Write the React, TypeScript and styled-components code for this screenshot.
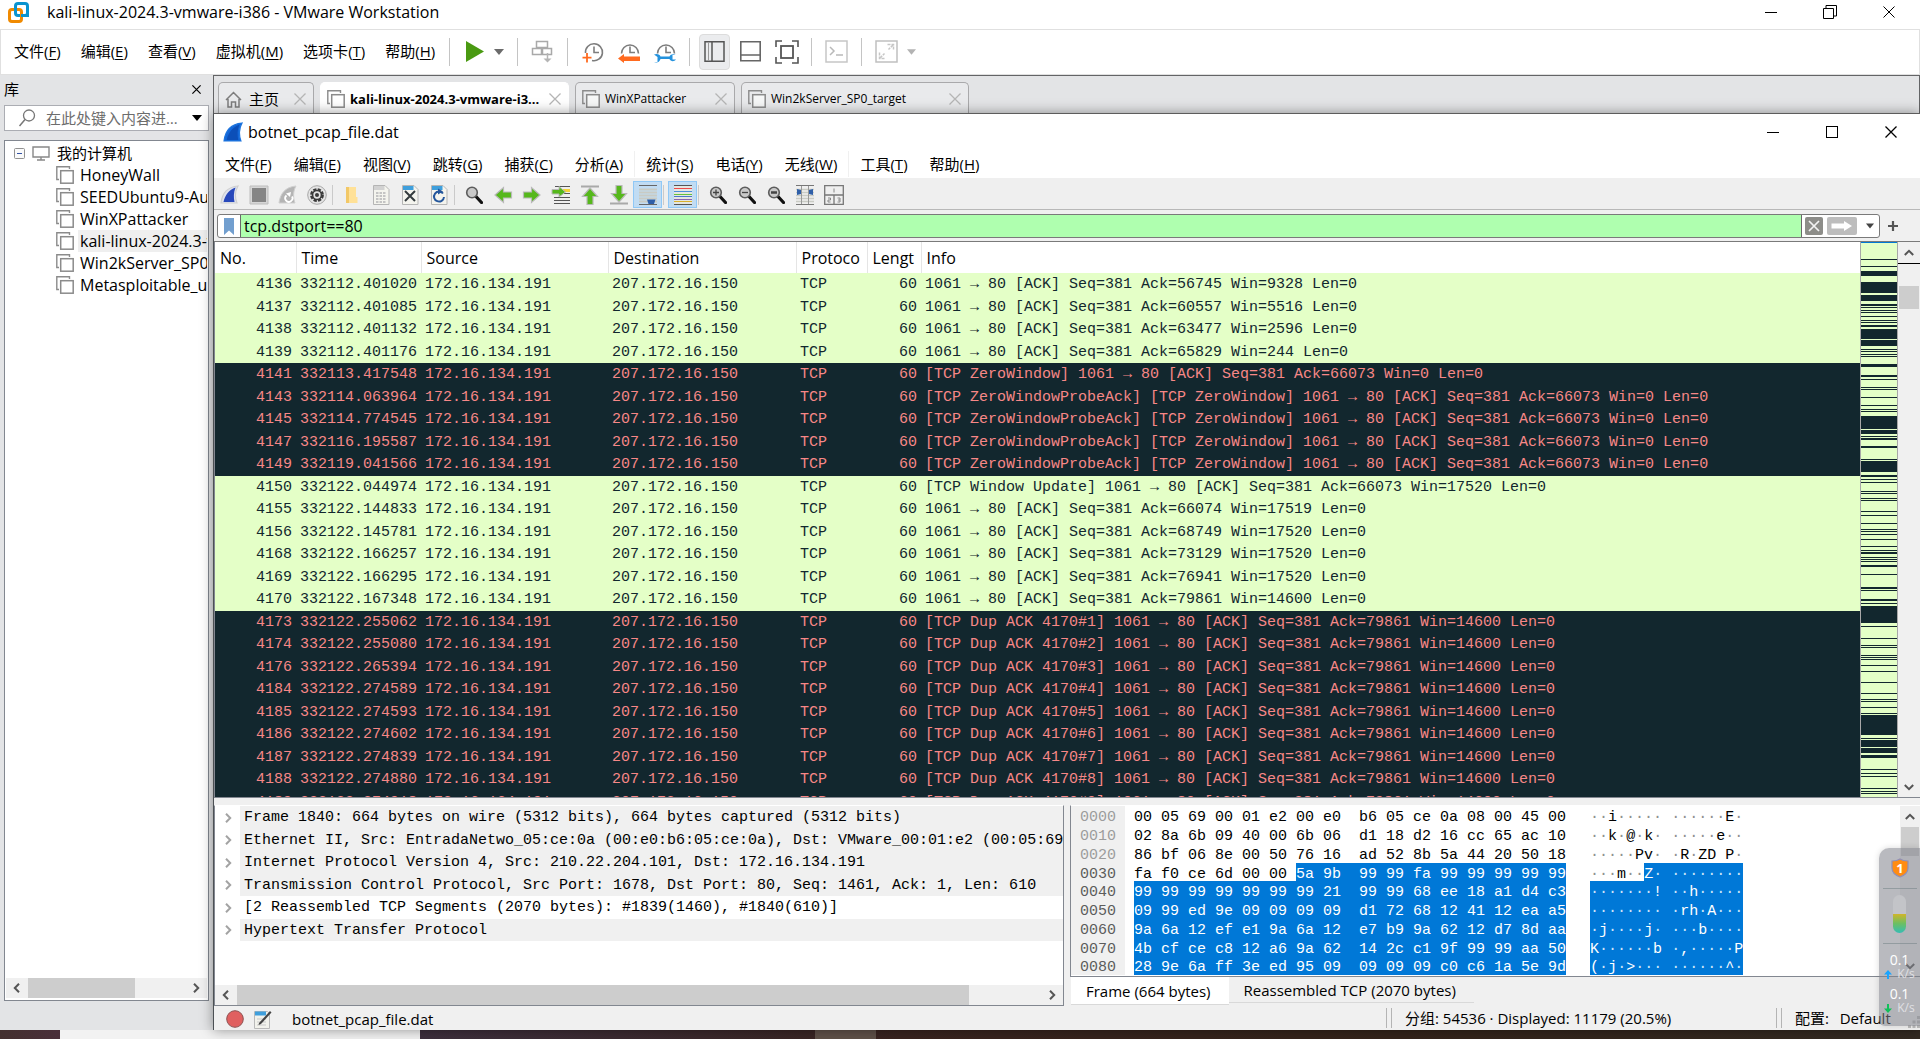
import React from "react";
import styled, { createGlobalStyle, css } from "styled-components";

const ui = `"Open Sans", "Noto Sans", "Noto Sans CJK SC", sans-serif`;
const mono = `"Liberation Mono", "DejaVu Sans Mono", "Noto Sans CJK SC", monospace`;
const c = {
  panel: "#e3e4e6",
  chrome: "#f0f0f0",
  light: "#e4ffc7",
  dark: "#12272e",
  alert: "#f78787",
  select: "#0078d7",
  line: "#828790",
};

const Global = createGlobalStyle`
  *, *::before, *::after { box-sizing: border-box; }
  body { margin: 0; font: 15px/20px ${ui}; color: #000; background: #fff; overflow: hidden; }
  button { border: 0; padding: 0; background: none; font: inherit; color: inherit; }
  input { font: inherit; }
  svg { display: block; flex: none; }
`;

const Screen = styled.div`
  height: 100vh;
  display: flex;
  flex-direction: column;
  position: relative;
`;

/* ---------- shared window parts ---------- */
const TitleBar = styled.header<{ $h: number; $gap: number; $pad: number; $lift?: number }>`
  height: ${(p) => p.$h}px;
  display: flex;
  align-items: center;
  gap: ${(p) => p.$gap}px;
  padding-left: ${(p) => p.$pad}px;
  padding-bottom: ${(p) => p.$lift ?? 0}px;
  flex: none;
  background: #fff;
`;
const WindowTitle = styled.h1`
  margin: 0;
  flex: 1;
  font-size: 16px;
  font-weight: 400;
  line-height: 22px;
`;
const WindowButtons = styled.div<{ $inset: number }>`
  display: flex;
  align-self: stretch;
  padding-right: ${(p) => p.$inset}px;
`;
const WindowButton = styled.button`
  width: 59px;
  display: flex;
  align-items: center;
  justify-content: center;
`;
const Menu = styled.nav`
  display: flex;
  align-items: center;
`;
const MenuItem = styled.button<{ $pad: number; $divided?: boolean }>`
  padding: 0 ${(p) => p.$pad}px;
  height: 26px;
  line-height: 24px;
  white-space: nowrap;
  border-left: ${(p) => (p.$divided ? "1px solid #f0f0f0" : "0")};
  u { text-underline-offset: 2px; }
`;

/* ---------- outer window ---------- */
const OuterTools = styled.div`
  height: 46px;
  flex: none;
  display: flex;
  align-items: center;
  border: 1px solid #e0e0e0;
  padding-left: 3px;
  > nav { padding-bottom: 2px; }
`;
const ToolRow = styled.div`
  display: flex;
  align-items: center;
  gap: 5px;
  padding-bottom: 1px;
`;
const Divider = styled.span`
  width: 1px;
  height: 28px;
  margin: 0 4px;
  background: #c4c4c4;
`;
const OuterTool = styled.button<{ $on?: boolean }>`
  width: 31px;
  height: 36px;
  display: flex;
  align-items: center;
  justify-content: center;
  border-radius: 4px;
  ${(p) => p.$on && css`background: #ebecee; border: 1px solid #dcdcdc;`}
`;
const Split = styled.div`display: flex;`;
const Drop = styled.button`
  width: 18px;
  display: flex;
  align-items: center;
  justify-content: center;
`;
const Workspace = styled.div`
  flex: 1;
  min-height: 0;
  display: grid;
  grid-template-columns: 213px minmax(0, 1fr);
  grid-template-rows: minmax(0, 1fr);
  background: ${c.panel};
`;

/* ---------- library ---------- */
const Library = styled.aside`
  display: flex;
  flex-direction: column;
  padding: 0 4px 29px;
  min-height: 0;
`;
const LibraryHead = styled.div`
  height: 30px;
  display: flex;
  align-items: center;
  justify-content: space-between;
  padding: 0 8px 2px 0;
  h2 { margin: 0; font-size: 15px; font-weight: 400; }
`;
const SearchBox = styled.label`
  height: 26px;
  display: flex;
  align-items: center;
  gap: 10px;
  margin-bottom: 9px;
  padding: 0 5px 0 13px;
  background: #fff;
  border: 1px solid #abadb3;
  input {
    flex: 1;
    min-width: 0;
    border: 0;
    padding: 0;
    height: 22px;
    outline: 0;
    text-overflow: ellipsis;
    background: none;
  }
  input::placeholder { color: #6d6d6d; opacity: 1; }
`;
const TreeBox = styled.div`
  flex: 1;
  min-height: 0;
  display: flex;
  flex-direction: column;
  background: #fff;
  border: 1px solid ${c.line};
  padding: 1px 1px 2px;
`;
const Tree = styled.ul`
  list-style: none;
  margin: 0;
  padding: 0;
  flex: 1;
  overflow: hidden;
`;
const TreeRow = styled.li<{ $child?: boolean; $on?: boolean }>`
  height: 22px;
  display: flex;
  align-items: center;
  gap: ${(p) => (p.$child ? 4 : 7)}px;
  padding-left: ${(p) => (p.$child ? 50 : 8)}px;
  font-size: ${(p) => (p.$child ? 16 : 15)}px;
  line-height: 22px;
  white-space: nowrap;
  span {
    flex: 1;
    overflow: hidden;
    padding-left: ${(p) => (p.$child ? 2 : 0)}px;
    background: ${(p) => (p.$on ? "#efefef" : "none")};
  }
`;
const HScroll = styled.div<{ $h: number }>`
  height: ${(p) => p.$h}px;
  flex: none;
  display: grid;
  grid-template-columns: 22px minmax(0, 1fr) 22px;
  background: ${c.chrome};
  button { display: flex; align-items: center; justify-content: center; }
`;
const HThumb = styled.div<{ $w: string }>`
  width: ${(p) => p.$w};
  background: #cdcdcd;
`;

/* ---------- tabs ---------- */
const MainColumn = styled.main`
  display: flex;
  flex-direction: column;
  min-width: 0;
  min-height: 0;
  border-top: 1px solid #636466;
`;
const TabStrip = styled.div`
  height: 37px;
  flex: none;
  display: flex;
  align-items: flex-end;
  gap: 6px;
  padding-left: 4px;
  border-left: 1px solid #636466;
  border-right: 1px solid #636466;
`;
const VmTab = styled.div<{ $on?: boolean; $w: number; $big?: boolean }>`
  width: ${(p) => p.$w}px;
  height: 31px;
  display: flex;
  align-items: center;
  gap: ${(p) => (p.$big ? 7 : 5)}px;
  padding: 2px 7px 0 6px;
  border: 1px solid ${(p) => (p.$on ? "#fff" : "#a9a9ab")};
  border-bottom: 0;
  border-radius: 5px 5px 0 0;
  background: ${(p) => (p.$on ? "#fff" : "#e9eaec")};
  > button:first-of-type {
    flex: 1;
    text-align: left;
    white-space: nowrap;
    font-size: ${(p) => (p.$big ? 15 : p.$on ? 13 : 12)}px;
    font-weight: ${(p) => (p.$on ? 700 : 400)};
    line-height: 22px;
  }
`;

/* ---------- capture window ---------- */
const Capture = styled.section`
  flex: 1;
  min-height: 0;
  position: relative;
  display: flex;
  flex-direction: column;
  background: ${c.chrome};
  border-top: 1px solid #5c5c5c;
  border-left: 1px solid #4c5054;
  box-shadow: 0 0 12px rgba(0, 0, 0, 0.4);
`;
const CaptureMenu = styled.div`
  height: 28px;
  flex: none;
  display: flex;
  align-items: flex-start;
  background: #fff;
  ${Menu} { height: 28px; }
`;
const CaptureTools = styled.div`
  height: 32px;
  flex: none;
  display: flex;
  align-items: center;
  padding: 2px 0 0 1px;
  background: #efefef;
  border-bottom: 1px solid #b8b8b8;
`;
const CaptureTool = styled.button<{ $on?: boolean }>`
  width: 29px;
  height: 27px;
  display: flex;
  align-items: center;
  justify-content: center;
  ${(p) => p.$on && css`background: #c1dcf3; border: 1px solid #90c8f6;`}
`;
const ToolSep = styled.span`
  width: 6px;
  height: 20px;
  border-left: 1px solid #cacaca;
  margin-left: 1px;
  margin-right: -1px;
`;
const FilterBar = styled.form`
  height: 32px;
  flex: none;
  display: flex;
  align-items: center;
  gap: 4px;
  padding: 0 18px 0 3px;
  border-bottom: 1px solid #7a7a7a;
`;
const FilterBox = styled.div`
  flex: 1;
  height: 24px;
  display: flex;
  align-items: stretch;
  background: #fff;
  border: 1px solid #7a7a7a;
  border-radius: 3px;
  overflow: hidden;
`;
const FilterInput = styled.input`
  flex: 1;
  min-width: 0;
  border: 0;
  border-left: 1px solid #6a6a6a;
  border-right: 1px solid #6a6a6a;
  background: #afffaf;
  font-size: 16px;
  padding: 0 3px;
  outline: 0;
`;
const FilterSide = styled.div`
  display: flex;
  align-items: center;
  padding-left: 3px;
  gap: 4px;
`;

/* ---------- packets ---------- */
const PacketPane = styled.div`
  flex: 1;
  min-height: 0;
  display: grid;
  grid-template-columns: minmax(0, 1fr) 38px 22px;
  grid-template-rows: minmax(0, 1fr);
  background: #fff;
  border-bottom: 1px solid ${c.line};
`;
const PacketClip = styled.div`
  overflow: hidden;
  border-left: 1px solid ${c.line};
`;
const Packets = styled.table`
  width: 100%;
  table-layout: fixed;
  border-collapse: collapse;
  th {
    height: 31px;
    padding: 0 0 0 5px;
    text-align: left;
    font: 400 16px/22px ${ui};
    white-space: nowrap;
    overflow: hidden;
    border-right: 1px solid #e5e5e5;
  }
  th:last-child { border-right: 0; }
  td {
    padding: 1px 4px 0;
    white-space: pre;
    overflow: hidden;
    line-height: 18px;
  }
  td:first-child, td:nth-child(6) { text-align: right; }
`;
const PacketRow = styled.tr<{ $bad: boolean }>`
  height: 22px;
  font: 15px ${mono};
  color: ${(p) => (p.$bad ? c.alert : c.dark)};
  background: ${(p) => (p.$bad ? c.dark : c.light)};
  &:nth-child(odd) { height: 23px; }
`;
const MiniMap = styled.div`
  border-left: 1px solid #a8a8a8;
  border-right: 1px solid #a8a8a8;
  background: ${c.light};
  overflow: hidden;
`;
const VScroll = styled.div`
  display: flex;
  flex-direction: column;
  align-items: stretch;
  background: ${c.chrome};
  padding: 0 1px;
  button { height: 21px; display: flex; align-items: center; justify-content: center; flex: none; }
`;
const VTrack = styled.div<{ $before: number; $edge?: boolean }>`
  flex: 1;
  margin: 0 -1px;
  padding: ${(p) => p.$before}px 1px 0;
  border-top: ${(p) => (p.$edge ? "1px solid #000" : "0")};
`;
const VThumb = styled.div<{ $h: number }>`
  height: ${(p) => p.$h}px;
  background: #cdcdcd;
`;

/* ---------- details and bytes ---------- */
const LowerPane = styled.div`
  height: 201px;
  margin-top: 7px;
  flex: none;
  display: grid;
  grid-template-columns: minmax(0, 1fr) minmax(0, 1fr);
  column-gap: 6px;
`;
const Details = styled.div`
  display: flex;
  flex-direction: column;
  background: #fff;
  border: 1px solid ${c.line};
  border-top-color: #fff;
`;
const DetailList = styled.ul`
  flex: 1;
  margin: 0;
  padding: 0;
  list-style: none;
  overflow: hidden;
`;
const DetailRow = styled.li<{ $plain?: boolean }>`
  height: 22px;
  display: flex;
  align-items: center;
  font: 15px/24px ${mono};
  white-space: pre;
  &:nth-child(odd) { height: 23px; }
  button { width: 25px; display: flex; justify-content: center; flex: none; }
  span {
    flex: 1;
    align-self: stretch;
    overflow: hidden;
    padding-left: 4px;
    background: ${(p) => (p.$plain ? "#fff" : c.chrome)};
  }
`;
const BytesColumn = styled.div`
  display: flex;
  flex-direction: column;
  min-width: 0;
`;
const BytesBox = styled.div`
  flex: 1;
  min-height: 0;
  display: grid;
  grid-template-columns: minmax(0, 1fr) 20px;
  background: #fff;
  border: 1px solid ${c.line};
  border-top-color: #fff;
  border-right: 0;
`;
const Dump = styled.div`overflow: hidden;`;
const DumpRow = styled.div`
  height: 19px;
  display: flex;
  font: 15px/19px ${mono};
  white-space: pre;
  &:nth-child(4n) { height: 18px; }
  > span { padding-top: 2px; }
`;
const Offset = styled.span<{ $dim: boolean }>`
  width: 54px;
  padding-left: 9px;
  margin-right: 9px;
  background: ${c.chrome};
  color: ${(p) => (p.$dim ? "#9c9c9c" : "#5c5c5c")};
`;
const Run = styled.span<{ $on?: boolean }>`
  ${(p) => p.$on && css`background: ${c.select}; color: #fff;`}
  i { font-style: normal; color: ${(p) => (p.$on ? "#cfe4f7" : "#909090")}; }
`;
const DumpGap = styled.span`width: 24px;`;
const ByteTabs = styled.div`
  height: 29px;
  flex: none;
  display: flex;
  align-items: flex-start;
  padding-left: 1px;
`;
const ByteTab = styled.button<{ $on?: boolean }>`
  height: ${(p) => (p.$on ? 28 : 26)}px;
  padding: 0 18px 0 15px;
  background: ${(p) => (p.$on ? "#fff" : c.chrome)};
  border-bottom: 1px solid #d9d9d9;
  white-space: nowrap;
`;
const StatusBar = styled.footer`
  height: 24px;
  flex: none;
  display: flex;
  align-items: center;
  line-height: 26px;
  white-space: nowrap;
`;
const StatusMain = styled.div`
  flex: 1;
  display: flex;
  align-items: center;
  padding: 2px 0 0 12px;
  gap: 10px;
  span { padding-left: 10px; }
`;
const StatusPart = styled.div<{ $w: number }>`
  width: ${(p) => p.$w}px;
  height: 20px;
  line-height: 24px;
  padding-left: 13px;
  border-left: 1px solid #b4b4b4;
  display: flex;
  justify-content: space-between;
  align-items: flex-end;
  &::before {
    content: "";
    align-self: stretch;
    margin-left: -9px;
    margin-right: 13px;
    border-left: 1px solid #b4b4b4;
  }
  > span { flex: 1; height: 22px; white-space: pre; }
`;
const Profile = styled.span`
  b { font-weight: 400; padding-left: 3px; }
`;
const TaskBar = styled.div`
  height: 9px;
  flex: none;
  display: flex;
  background: linear-gradient(90deg, #43302f 0, #4a2f3a 60px, #3d2f3d 420px, #38231f 900px, #33231a 1400px, #332a22);
`;
const TaskSlot = styled.div<{ $from: number; $w: number; $tone: string }>`
  margin-left: ${(p) => p.$from}px;
  width: ${(p) => p.$w}px;
  background: ${(p) => p.$tone};
`;

/* ---------- floating speed meter ---------- */
const Meter = styled.aside`
  position: absolute;
  right: 0;
  bottom: 13px;
  width: 41px;
  height: 178px;
  display: flex;
  flex-direction: column;
  align-items: center;
  padding-top: 10px;
  border-radius: 10px 0 0 6px;
  background: rgba(128, 130, 138, 0.55);
  box-shadow: 0 0 6px rgba(0, 0, 0, 0.15);
  color: #fff;
`;
const MeterRule = styled.hr<{ $gap: number }>`
  width: 34px;
  margin: ${(p) => p.$gap}px 0 0;
  border: 0;
  border-top: 1px solid rgba(110, 125, 130, 0.5);
`;
const Gauge = styled.div`
  width: 13px;
  height: 38px;
  margin: 6px 0 2px;
  border-radius: 7px;
  background: linear-gradient(#c3c4c8 49%, #d0b52a 50%, #6cbf62 75%, #35bdb4);
`;
const Rates = styled.div`
  display: grid;
  gap: 6px;
  padding-top: 8px;
`;
const Rate = styled.div`
  display: grid;
  justify-items: center;
  font-size: 14px;
  line-height: 16px;
  small {
    display: flex;
    align-items: center;
    gap: 5px;
    font-size: 12px;
    line-height: 12px;
    color: #e0e0e4;
  }
`;

/* ---------- drawings ---------- */
const Svg = ({ w = 20, h = w, box = `0 0 ${w} ${h}`, children }: any) => (
  <svg width={w} height={h} viewBox={box} fill="none" aria-hidden="true">{children}</svg>
);
const Minimize = () => <Svg w={12}><path d="M0 6.5h12" stroke="#000" /></Svg>;
const Maximize = () => <Svg w={12}><rect x=".5" y=".5" width="11" height="11" stroke="#000" /></Svg>;
const Restore = () => <Svg w={14}><path d="M.5 3.5h10v10h-10zM3 3V.5h10.500v10.500H11" stroke="#000" /></Svg>;
const Close = ({ s = 12, tone = "#000", t = 1 }: any) => (
  <Svg w={s} box="0 0 12 12"><path d="M.5.5l11 11M11.500.5l-11 11" stroke={tone} strokeWidth={t} /></Svg>
);
const Chevron = ({ turn = 0, tone = "#555", s = 10 }: any) => (
  <Svg w={s} box="0 0 10 10">
    <path d="M3 .8L7.200 5 3 9.200" stroke={tone} strokeWidth="2" transform={`rotate(${turn} 5 5)`} />
  </Svg>
);
const Caret = ({ w = 10, tone = "#6b6b6b" }: any) => (
  <Svg w={w} h={6} box="0 0 10 6"><path d="M0 0h10L5 6z" fill={tone} /></Svg>
);
const VmLogo = () => (
  <Svg w={21} h={21}>
    <rect x="7.500" y="1.500" width="12" height="12" rx="2.500" stroke="#0a93cf" strokeWidth="3" />
    <rect x="1.500" y="7.500" width="12" height="12" rx="2.500" stroke="#f08a00" strokeWidth="3" />
    <path d="M7.500 10V5M19.500 9v4.500H13" stroke="#0a93cf" strokeWidth="3" />
  </Svg>
);
const VmIcon = () => (
  <Svg w={18}>
    <path d="M3 13.500H.800V.800H13.500V3" stroke="#8b8b8b" strokeWidth="1.400" />
    <rect x="4.700" y="4.700" width="12.500" height="12.500" stroke="#8b8b8b" strokeWidth="1.500" fill="#fff" fillOpacity=".6" />
  </Svg>
);
const Clock = ({ kind }: { kind: "add" | "back" | "manage" }) => (
  <Svg w={22}>
    <path d={kind === "add" ? "M3.500 12A8.500 8.500 0 1 1 10 19.500" : "M3.500 12.500A8.500 8.500 0 1 1 20.500 12.500"} stroke="#7d7d7d" strokeWidth="1.600" />
    <path d="M12 5.500v6h5" stroke="#7d7d7d" strokeWidth="1.600" />
    {kind === "add" && <path d="M5 12v9.500M.5 16.700h9" stroke="#ff6a1f" strokeWidth="1.800" />}
    {kind === "back" && <path d="M0 17.500L6 13v2.500h16v4.500H6V22z" fill="#ff6a1f" />}
    {kind === "manage" && (
      <path d="M0 13.500c3-1.500 6 0 6.500 2h9c1-2.500 4-3 6-1.500h-3v4.500h3.500c-2 2.500-5.500 2-6.500-.5h-9c-1 3.500-4 4-6.500 3h3.500v-5z" fill="#2492dd" />
    )}
  </Svg>
);
const SendKeys = () => (
  <Svg w={23} h={23}>
    <path d="M5.500 1.500h11v6h-11zM1.500 8.500h9v6h-9zM11.500 8.500h9v6h-9z" stroke="#a9a9a9" strokeWidth="1.500" />
    <path d="M16.500 13v7" stroke="#b5b5b5" strokeWidth="1.500" /><path d="M12.500 18.500h8l-4 4z" fill="#b5b5b5" />
  </Svg>
);
const PaneLeft = () => <Svg w={21}><path d="M1 .800h19v19.400H1zM8 1v19" stroke="#555" strokeWidth="1.500" /><path d="M4.500 1v19" stroke="#999" strokeWidth="1" /></Svg>;
const PaneBottom = () => <Svg w={21}><path d="M.800.800h19.400v19H.800zM1 14h19" stroke="#666" strokeWidth="1.600" /></Svg>;
const FullScreen = () => (
  <Svg w={24}>
    <path d="M1 7V1h6M17 1h6v6M23 17v6h-6M7 23H1v-6" stroke="#555" strokeWidth="1.600" />
    <rect x="6" y="6" width="12" height="12" stroke="#555" strokeWidth="1.800" />
  </Svg>
);
const Console = () => <Svg w={23}><path d="M1 1h21v21H1z" stroke="#c6c6c6" strokeWidth="1.500" /><path d="M5 7l4 4-4 4M11 15h7" stroke="#b9b9b9" strokeWidth="1.500" /></Svg>;
const Stretch = () => (
  <Svg w={23}>
    <path d="M1 1h21v21H1z" stroke="#c0c0c0" strokeWidth="1.500" />
    <path d="M12.500 4.500h6v6M18 5l-4.500 4.500M4.500 12.500v6h6M5 18l4.500-4.500" stroke="#c6c6c6" strokeWidth="1.500" strokeDasharray="3 1" />
  </Svg>
);
const House = () => <Svg w={17}><path d="M1 9l7.500-7.500L16 9M3 8v8h3.500v-5h4v5H14V8" stroke="#7d7d7d" strokeWidth="1.500" /></Svg>;
const Lens = () => <Svg w={18}><circle cx="11" cy="6.500" r="5.500" stroke="#777" strokeWidth="1.300" /><path d="M7 10.500L1.500 17" stroke="#777" strokeWidth="1.500" /></Svg>;
const Computer = () => <Svg w={18} h={15}><path d="M1 1h16v10H1zM9 11v3M5 14h8" stroke="#888" strokeWidth="1.400" /></Svg>;
const Collapse = () => <Svg w={11}><rect x=".5" y=".5" width="10" height="10" rx="1" fill="#fafafa" stroke="#919191" /><path d="M3 5.500h5" stroke="#3353a5" /></Svg>;

const Fin = ({ a, b, edge = "#cfcfcf", s = 19 }: any) => (
  <Svg w={s} box="0 0 19 19">
    <path d="M1 18C2 9 7 2 18 1c-3 5-3 12-1 17z" fill={a} stroke={edge} strokeWidth="1.200" />
    <path d="M3.500 17C5 10 9 5 15.500 2.500c-2 5-2 10-1 14.500z" fill={b} />
  </Svg>
);
const StopIcon = () => <Svg w={20}><path d="M1 1h18v18H1z" fill="#d6d6d6" stroke="#bdbdbd" /><path d="M3 3h14v14H3z" fill="#858585" /></Svg>;
const Restart = () => (
  <Svg w={19}>
    <path d="M1 18C2 9 7 2 18 1c-3 5-3 12-1 17z" fill="#b4b4b4" stroke="#cfcfcf" />
    <path d="M8.500 10.500A3.600 3.600 0 1 0 14 11.500" stroke="#fff" strokeWidth="1.800" /><path d="M8 8.500l5-1.500-1 5z" fill="#fff" />
  </Svg>
);
const Gear = () => (
  <Svg w={20}>
    <circle cx="10" cy="10" r="9.300" fill="#e4e4e4" stroke="#a6a6a6" />
    <circle cx="10" cy="10" r="5.700" stroke="#3b3b3b" strokeWidth="2.400" strokeDasharray="3.200 1.280" />
    <circle cx="10" cy="10" r="4.400" stroke="#3b3b3b" strokeWidth="1.500" /><circle cx="10" cy="10" r="2" fill="#3b3b3b" />
  </Svg>
);
const Folder = () => <Svg w={13} h={18}><path d="M1 1h5v16H1z" fill="#f2c867" /><path d="M4 1h7v10h1.500v6H4z" fill="#ffe197" /></Svg>;
const Page = ({ kind }: { kind: "save" | "close" | "reload" }) => (
  <Svg w={18} h={20}>
    <path d="M1.500.5H13l4 4v15H1.500z" fill="#f4f4ee" stroke="#b5b5b5" />
    {kind === "save"
      ? <><path d="M2 1h10.500v4H2z" fill="#d2d2d2" /><path d="M4 8h10M4 11h10M4 14h10M4 17h10" stroke="#c4c4c4" strokeWidth="1.800" strokeDasharray="2.500 1" /></>
      : <path d="M2 1h10.500v4H2z" fill="#3f9fdc" />}
    {kind === "close" && <path d="M4 6l10 10M14 6L4 16" stroke="#333a3d" strokeWidth="2" />}
    {kind === "reload" && <><path d="M13 8.500A5 5 0 1 0 14 12" stroke="#24569c" strokeWidth="2" /><path d="M8 3.500v6l5-3z" fill="#24569c" /></>}
  </Svg>
);
const Glass = ({ sign }: { sign?: string }) => (
  <Svg w={18}>
    <path d="M11 10.500l5.500 6" stroke="#111" strokeWidth="3.200" strokeLinecap="round" />
    <circle cx="7" cy="6.500" r="5.300" fill="#c9c9c9" stroke="#5c5c5c" strokeWidth="1.600" />
    {sign && <path d={sign} stroke="#444" strokeWidth="1.300" />}
  </Svg>
);
const Arrow = ({ turn = 0, bar }: { turn?: number; bar?: "top" | "bottom" }) => (
  <Svg w={20}>
    <g transform={`rotate(${turn} 10 10) ${bar ? "translate(-1 0)" : ""}`}>
      <path d="M1.500 7H9.500V2.500l8.500 7.500-8.500 7.500V13H1.500z" fill="#56b81c" stroke="#b9b9b9" strokeWidth="1.200" />
    </g>
    {bar && <path d={bar === "top" ? "M1 1.500h18" : "M1 18.500h18"} stroke="#a9a9a9" strokeWidth="2" />}
  </Svg>
);
const GoTo = () => (
  <Svg w={20}>
    <path d="M4 1.500h15M13 8.500h6M3 12.500h16M3 15.500h16M3 18.500h16" stroke="#555" strokeWidth="1.200" />
    <path d="M12 5.500h7" stroke="#f5d33c" strokeWidth="3" />
    <path d="M1 4.500h7V1.500l6.500 5.500-6.500 5v-3H1z" fill="#56b81c" stroke="#b9b9b9" />
  </Svg>
);
const AutoScroll = () => <Svg w={18} h={20}><path d="M0 .5h18M0 19.500h18" stroke="#666" /><path d="M0 4.500h18M0 7.500h18M0 10.500h18M0 13.500h18M0 16.500h18" stroke="#c9cbc4" strokeWidth="2" /><path d="M8 14.500h8.500l-1.500 4.500h-5.500z" fill="#2f5fa8" /></Svg>;
const Colorize = () => (
  <Svg w={18} h={20}>
    <path d="M0 0h18v20H0z" fill="#e4e6e1" />
    {["#555", "#ee4a4a", "#4c8fd9", "#66c23a", "#4b78c8", "#8a64b0", "#d8b02d", "#555"].map((k, i) => (
      <path key={k + i} d={`M0 ${[0, 3, 6, 9, 11, 14, 16, 19][i]}.5h18`} stroke={k} />
    ))}
  </Svg>
);
const Columns = () => <Svg w={18} h={20}><path d="M0 4.500h18M0 7.500h18M0 10.500h18M0 13.500h18M0 16.500h18" stroke="#c9cbc4" strokeWidth="1.500" /><path d="M0 .5h18M0 19.500h18" stroke="#777" /><path d="M5.500 1v18M12.500 1v18" stroke="#999" /><path d="M1 4l4 1v4l-4 1zM17 4l-4 1v4l4 1z" fill="#2f5fa8" /></Svg>;
const LayoutIcon = () => (
  <Svg w={20}>
    <path d="M.700.700h18.600v18.600H.700zM1 10h18M10 10v9" stroke="#777" strokeWidth="1.300" />
    <path d="M10 3.500v4M4 13h2.500v2H4v2h2.500M13.500 13H16v4h-2.500M14 15h2" stroke="#888" />
  </Svg>
);
const Bookmark = () => <Svg w={22} h={22}><path d="M6 3h10v17l-5-4.500L6 20z" fill="#729fcf" /></Svg>;
const ClearFilter = () => <Svg w={18}><rect width="18" height="18" rx="2" fill="#8d8d89" /><path d="M4 4l10 10M14 4L4 14" stroke="#f2f2f2" strokeWidth="1.700" /></Svg>;
const ApplyFilter = () => <Svg w={30} h={18}><rect width="30" height="18" rx="2" fill="#bdbdbd" /><path d="M4.500 6.500H17V4l8 5-8 5v-2.500H4.500z" fill="#fff" /></Svg>;
const Plus = () => <Svg w={10}><path d="M5 0v10M0 5h10" stroke="#555" strokeWidth="2.200" /></Svg>;
const Expert = () => <Svg w={18}><circle cx="9" cy="9" r="8.300" fill="#e06060" stroke="#8d5353" /></Svg>;
const Note = () => (
  <Svg w={18} h={19}>
    <path d="M.5 1.500h13l2 2v15H.5z" fill="#f2f2ec" stroke="#b9b9b9" /><path d="M1 1.500h11v4H1z" fill="#3f9fdc" />
    <path d="M3 9h9M3 12h9M3 15h9" stroke="#c9c9c9" /><path d="M5 13L16 1l1.500 1.500L7 14l-2.500 1z" fill="#444" />
  </Svg>
);
const Shield = () => (
  <Svg w={18} h={20}>
    <path d="M9 1c2.500 1.800 5 2 8 2v7c0 4.500-4 7.500-8 9-4-1.500-8-4.500-8-9V3c3 0 5.500-.2 8-2z" fill="#ff8c12" stroke="#8f8fb8" strokeWidth="1.200" />
    <text x="9" y="14.500" textAnchor="middle" fontFamily={ui} fontSize="13" fontWeight="700" fill="#fff">1</text>
  </Svg>
);
const RateArrow = ({ down, tone }: { down?: boolean; tone: string }) => (
  <Svg w={8} h={9}><path d={down ? "M4 9L0 4.500h3V0h2v4.500h3z" : "M4 0L0 4.500h3V9h2V4.500h3z"} fill={tone} /></Svg>
);
const Grip = () => <Svg w={12}><path d="M9 0h3v3H9zM4.500 4.500h3v3h-3zM9 4.500h3v3H9zM0 9h3v3H0zM4.500 9h3v3h-3zM9 9h3v3H9z" fill="#bcbcbc" /></Svg>;

/* ---------- data ---------- */
const outerMenu = ["文件F", "编辑E", "查看V", "虚拟机M", "选项卡T", "帮助H"];
const captureMenu = ["文件F", "编辑E", "视图V", "跳转G", "捕获C", "分析A", "统计S", "电话Y", "无线W", "工具T", "帮助H"];
const machines = ["HoneyWall", "SEEDUbuntu9-Aug", "WinXPattacker", "kali-linux-2024.3-v", "Win2kServer_SP0_", "Metasploitable_u"];
const columns: [string, number | undefined][] = [
  ["No.", 81], ["Time", 125], ["Source", 187], ["Destination", 188], ["Protoco", 71], ["Lengt", 54], ["Info", undefined],
];
const ack = (n: number, win: number) => `1061 → 80 [ACK] Seq=381 Ack=${n} Win=${win} Len=0`;
const probe = `[TCP ZeroWindowProbeAck] [TCP ZeroWindow] ${ack(66073, 0)}`;
const dup = (n: number) => `[TCP Dup ACK 4170#${n}] ${ack(79861, 14600)}`;
const packets: [number, string, string, boolean][] = [
  [4136, "332112.401020", ack(56745, 9328), false],
  [4137, "332112.401085", ack(60557, 5516), false],
  [4138, "332112.401132", ack(63477, 2596), false],
  [4139, "332112.401176", ack(65829, 244), false],
  [4141, "332113.417548", `[TCP ZeroWindow] ${ack(66073, 0)}`, true],
  [4143, "332114.063964", probe, true],
  [4145, "332114.774545", probe, true],
  [4147, "332116.195587", probe, true],
  [4149, "332119.041566", probe, true],
  [4150, "332122.044974", `[TCP Window Update] ${ack(66073, 17520)}`, false],
  [4155, "332122.144833", ack(66074, 17519), false],
  [4156, "332122.145781", ack(68749, 17520), false],
  [4168, "332122.166257", ack(73129, 17520), false],
  [4169, "332122.166295", ack(76941, 17520), false],
  [4170, "332122.167348", ack(79861, 14600), false],
  [4173, "332122.255062", dup(1), true],
  [4174, "332122.255080", dup(2), true],
  [4176, "332122.265394", dup(3), true],
  [4184, "332122.274589", dup(4), true],
  [4185, "332122.274593", dup(5), true],
  [4186, "332122.274602", dup(6), true],
  [4187, "332122.274839", dup(7), true],
  [4188, "332122.274880", dup(8), true],
  [4189, "332122.274918", dup(9), true],
];
const stripes =
  "17 24 29:5 40:11 53:6 62:2 65 68 70 74 78 80 83:2 87:10 98:6 107 109 112 114 122:3 133:2 137 145 147 155 163 167 169 174:13 188:4 194 196:2 204:2 217 219:11 233:2 237 240 249 251 256 258 269 273 281 287 289 292 297 304 308 310:2 315 317 319 323:2 332 345:2 348 357:2 361 364:17 384 396 403 405 413 415 417 423 429 440 451 457 459 465 471 473:20 496 498:7 506:5 513:3 527 531 534 546 549 551"
    .split(" ")
    .map((s) => s.split(":").map(Number));
const details = [
  "Frame 1840: 664 bytes on wire (5312 bits), 664 bytes captured (5312 bits)",
  "Ethernet II, Src: EntradaNetwo_05:ce:0a (00:e0:b6:05:ce:0a), Dst: VMware_00:01:e2 (00:05:69:",
  "Internet Protocol Version 4, Src: 210.22.204.101, Dst: 172.16.134.191",
  "Transmission Control Protocol, Src Port: 1678, Dst Port: 80, Seq: 1461, Ack: 1, Len: 610",
  "[2 Reassembled TCP Segments (2070 bytes): #1839(1460), #1840(610)]",
  "Hypertext Transfer Protocol",
];
/* offset, hex, text, first selected byte */
const dump: [string, string, string, number][] = [
  ["0000", "00 05 69 00 01 e2 00 e0  b6 05 ce 0a 08 00 45 00", "··i····· ······E·", 16],
  ["0010", "02 8a 6b 09 40 00 6b 06  d1 18 d2 16 cc 65 ac 10", "··k·@·k· ·····e··", 16],
  ["0020", "86 bf 06 8e 00 50 76 16  ad 52 8b 5a 44 20 50 18", "·····Pv· ·R·ZD P·", 16],
  ["0030", "fa f0 ce 6d 00 00 5a 9b  99 99 fa 99 99 99 99 99", "···m··Z· ········", 6],
  ["0040", "99 99 99 99 99 99 99 21  99 99 68 ee 18 a1 d4 c3", "·······! ··h·····", 0],
  ["0050", "09 99 ed 9e 09 09 09 09  d1 72 68 12 41 12 ea a5", "········ ·rh·A···", 0],
  ["0060", "9a 6a 12 ef e1 9a 6a 12  e7 b9 9a 62 12 d7 8d aa", "·j····j· ···b····", 0],
  ["0070", "4b cf ce c8 12 a6 9a 62  14 2c c1 9f 99 99 aa 50", "K······b ·,·····P", 0],
  ["0080", "28 9e 6a ff 3e ed 95 09  09 09 09 c0 c6 1a 5e 9d", "(·j·>··· ······^·", 0],
];
const tint = (s: string) =>
  s.split(/(·+)/).map((part, i) => (part.startsWith("·") ? <i key={i}>{part}</i> : part));

const MenuBar = ({ items, pad, divided = [] }: { items: string[]; pad: number; divided?: number[] }) => (
  <Menu>
    {items.map((m, i) => (
      <MenuItem key={m} $pad={pad} $divided={divided.includes(i)}>
        {m.slice(0, -1)}(<u>{m.slice(-1)}</u>)
      </MenuItem>
    ))}
  </Menu>
);

export default function App() {
  return (
    <Screen>
      <Global />
      <TitleBar $h={29} $gap={18} $pad={8} $lift={5}>
        <VmLogo />
        <WindowTitle>kali-linux-2024.3-vmware-i386 - VMware Workstation</WindowTitle>
        <WindowButtons $inset={2}>
          <WindowButton aria-label="Minimize"><Minimize /></WindowButton>
          <WindowButton aria-label="Restore"><Restore /></WindowButton>
          <WindowButton aria-label="Close"><Close /></WindowButton>
        </WindowButtons>
      </TitleBar>
      <OuterTools>
        <MenuBar items={outerMenu} pad={10} />
        <ToolRow>
          <Divider />
          <Split>
            <OuterTool aria-label="Power on"><Svg w={20} h={21}><path d="M1 0l18 10.500L1 21z" fill="#4a9a12" /></Svg></OuterTool>
            <Drop aria-label="Power options"><Caret /></Drop>
          </Split>
          <Divider />
          <OuterTool aria-label="Send keys"><SendKeys /></OuterTool>
          <Divider />
          <OuterTool aria-label="Take snapshot"><Clock kind="add" /></OuterTool>
          <OuterTool aria-label="Revert snapshot"><Clock kind="back" /></OuterTool>
          <OuterTool aria-label="Manage snapshots"><Clock kind="manage" /></OuterTool>
          <Divider />
          <OuterTool $on aria-label="Library"><PaneLeft /></OuterTool>
          <OuterTool aria-label="Thumbnail bar"><PaneBottom /></OuterTool>
          <OuterTool aria-label="Full screen"><FullScreen /></OuterTool>
          <Divider />
          <OuterTool aria-label="Console"><Console /></OuterTool>
          <Divider />
          <Split>
            <OuterTool aria-label="Stretch"><Stretch /></OuterTool>
            <Drop aria-label="Stretch options"><Caret w={9} tone="#b3b3b3" /></Drop>
          </Split>
        </ToolRow>
      </OuterTools>

      <Workspace>
        <Library>
          <LibraryHead>
            <h2>库</h2>
            <button aria-label="Close library"><Close s={9} t={1.6} /></button>
          </LibraryHead>
          <SearchBox>
            <Lens />
            <input placeholder="在此处键入内容进行搜索" aria-label="搜索" />
            <Caret w={12} tone="#000" />
          </SearchBox>
          <TreeBox>
            <Tree>
              <TreeRow><Collapse /><Computer /><span>我的计算机</span></TreeRow>
              {machines.map((m, i) => (
                <TreeRow key={m} $child $on={i === 3}><VmIcon /><span>{m}</span></TreeRow>
              ))}
            </Tree>
            <HScroll $h={20}>
              <button aria-label="Scroll left"><Chevron turn={180} /></button>
              <HThumb $w="68%" />
              <button aria-label="Scroll right"><Chevron /></button>
            </HScroll>
          </TreeBox>
        </Library>

        <MainColumn>
          <TabStrip>
            <VmTab $w={96} $big><House /><button>主页</button><button aria-label="Close tab"><Close tone="#b5b5b5" t={1.3} /></button></VmTab>
            <VmTab $w={249} $on><VmIcon /><button>kali-linux-2024.3-vmware-i3...</button><button aria-label="Close tab"><Close tone="#b5b5b5" t={1.3} /></button></VmTab>
            <VmTab $w={160}><VmIcon /><button>WinXPattacker</button><button aria-label="Close tab"><Close tone="#b5b5b5" t={1.3} /></button></VmTab>
            <VmTab $w={228}><VmIcon /><button>Win2kServer_SP0_target</button><button aria-label="Close tab"><Close tone="#b5b5b5" t={1.3} /></button></VmTab>
          </TabStrip>

          <Capture>
            <TitleBar $h={36} $gap={5} $pad={9}>
              <Fin a="#1467d8" b="#0c4fb8" edge="#1d74dd" s={20} />
              <WindowTitle>botnet_pcap_file.dat</WindowTitle>
              <WindowButtons $inset={0}>
                <WindowButton aria-label="Minimize"><Minimize /></WindowButton>
                <WindowButton aria-label="Maximize"><Maximize /></WindowButton>
                <WindowButton aria-label="Close"><Close t={1.3} /></WindowButton>
              </WindowButtons>
            </TitleBar>
            <CaptureMenu><MenuBar items={captureMenu} pad={11} divided={[6, 9]} /></CaptureMenu>
            <CaptureTools>
              <CaptureTool aria-label="Start"><Fin a="#dfe2ee" b="#2848bb" /></CaptureTool>
              <CaptureTool aria-label="Stop"><StopIcon /></CaptureTool>
              <CaptureTool aria-label="Restart"><Restart /></CaptureTool>
              <CaptureTool aria-label="Options"><Gear /></CaptureTool>
              <ToolSep />
              <CaptureTool aria-label="Open"><Folder /></CaptureTool>
              <CaptureTool aria-label="Save"><Page kind="save" /></CaptureTool>
              <CaptureTool aria-label="Close file"><Page kind="close" /></CaptureTool>
              <CaptureTool aria-label="Reload"><Page kind="reload" /></CaptureTool>
              <ToolSep />
              <CaptureTool aria-label="Find"><Glass /></CaptureTool>
              <CaptureTool aria-label="Back"><Arrow turn={180} /></CaptureTool>
              <CaptureTool aria-label="Forward"><Arrow /></CaptureTool>
              <CaptureTool aria-label="Go to packet"><GoTo /></CaptureTool>
              <CaptureTool aria-label="First packet"><Arrow turn={-90} bar="top" /></CaptureTool>
              <CaptureTool aria-label="Last packet"><Arrow turn={90} bar="bottom" /></CaptureTool>
              <CaptureTool $on aria-label="Auto scroll"><AutoScroll /></CaptureTool>
              <ToolSep />
              <CaptureTool $on aria-label="Colorize"><Colorize /></CaptureTool>
              <ToolSep />
              <CaptureTool aria-label="Zoom in"><Glass sign="M7 3.500v6M4 6.500h6" /></CaptureTool>
              <CaptureTool aria-label="Zoom out"><Glass sign="M4 6.500h6" /></CaptureTool>
              <CaptureTool aria-label="Normal size"><Glass sign="M4 5.800h6M4 7.200h6" /></CaptureTool>
              <CaptureTool aria-label="Resize columns"><Columns /></CaptureTool>
              <CaptureTool aria-label="Layout"><LayoutIcon /></CaptureTool>
            </CaptureTools>
            <FilterBar onSubmit={(e) => e.preventDefault()}>
              <FilterBox>
                <button type="button" aria-label="Bookmarks"><Bookmark /></button>
                <FilterInput aria-label="Display filter" defaultValue="tcp.dstport==80" />
                <FilterSide>
                  <button type="button" aria-label="Clear"><ClearFilter /></button>
                  <button type="submit" aria-label="Apply"><ApplyFilter /></button>
                  <Drop type="button" aria-label="Recent filters"><Caret w={8} tone="#444" /></Drop>
                </FilterSide>
              </FilterBox>
              <Drop type="button" aria-label="Add filter button"><Plus /></Drop>
            </FilterBar>

            <PacketPane>
              <PacketClip>
                <Packets>
                  <colgroup>
                    {columns.map(([name, w]) => <col key={name} width={w} />)}
                  </colgroup>
                  <thead>
                    <tr>{columns.map(([name]) => <th key={name} scope="col">{name}</th>)}</tr>
                  </thead>
                  <tbody>
                    {packets.map(([no, time, info, bad]) => (
                      <PacketRow key={no} $bad={bad}>
                        <td>{no}</td><td>{time}</td><td>172.16.134.191</td><td>207.172.16.150</td><td>TCP</td><td>60</td><td>{info}</td>
                      </PacketRow>
                    ))}
                  </tbody>
                </Packets>
              </PacketClip>
              <MiniMap>
                <svg width="100%" height="100%" viewBox="0 0 36 555" preserveAspectRatio="none" shapeRendering="crispEdges" aria-hidden="true">
                  <rect width="36" height="1" fill={c.select} />
                  {stripes.map(([y, h = 1]) => <rect key={y} y={y} width="36" height={h} fill={c.dark} />)}
                </svg>
              </MiniMap>
              <VScroll>
                <button aria-label="Scroll up"><Chevron turn={-90} /></button>
                <VTrack $before={22} $edge><VThumb $h={23} /></VTrack>
                <button aria-label="Scroll down"><Chevron turn={90} /></button>
              </VScroll>
            </PacketPane>

            <LowerPane>
              <Details>
                <DetailList>
                  {details.map((d, i) => (
                    <DetailRow key={d} $plain={i === 4}>
                      <button aria-label="Expand"><Chevron tone="#a3a3a3" /></button>
                      <span>{d}</span>
                    </DetailRow>
                  ))}
                </DetailList>
                <HScroll $h={20}>
                  <button aria-label="Scroll left"><Chevron turn={180} /></button>
                  <HThumb $w="91%" />
                  <button aria-label="Scroll right"><Chevron /></button>
                </HScroll>
              </Details>
              <BytesColumn>
                <BytesBox>
                  <Dump>
                    {dump.map(([off, hex, text, from]) => {
                      const cut = from === 16 ? [hex.length, text.length] : [from * 3, from];
                      return (
                        <DumpRow key={off}>
                          <Offset $dim={from === 16}>{off}</Offset>
                          <Run>{hex.slice(0, cut[0])}</Run>
                          <Run $on>{hex.slice(cut[0])}</Run>
                          <DumpGap />
                          <Run>{tint(text.slice(0, cut[1]))}</Run>
                          <Run $on>{tint(text.slice(cut[1]))}</Run>
                        </DumpRow>
                      );
                    })}
                  </Dump>
                  <VScroll>
                    <button aria-label="Scroll up"><Chevron turn={-90} /></button>
                    <VTrack $before={0}><VThumb $h={29} /></VTrack>
                    <button aria-label="Scroll down"><Chevron turn={90} /></button>
                  </VScroll>
                </BytesBox>
                <ByteTabs>
                  <ByteTab $on>Frame (664 bytes)</ByteTab>
                  <ByteTab>Reassembled TCP (2070 bytes)</ByteTab>
                </ByteTabs>
              </BytesColumn>
            </LowerPane>

            <StatusBar>
              <StatusMain><Expert /><Note /><span>botnet_pcap_file.dat</span></StatusMain>
              <StatusPart $w={390}><span>分组: 54536 · Displayed: 11179 (20.5%)</span></StatusPart>
              <StatusPart $w={144}><Profile>配置:  <b>Default</b></Profile><Grip /></StatusPart>
            </StatusBar>
          </Capture>
        </MainColumn>
      </Workspace>

      <TaskBar>
        <TaskSlot $from={60} $w={360} $tone="#f2f2f2" />
        <TaskSlot $from={395} $w={61} $tone="#5f5149" />
      </TaskBar>

      <Meter>
        <Shield />
        <MeterRule $gap={10} />
        <Gauge />
        <MeterRule $gap={8} />
        <Rates>
          <Rate><span>0.1</span><small><RateArrow tone="#19a4ff" />K/s</small></Rate>
          <Rate><span>0.1</span><small><RateArrow down tone="#12bf5a" />K/s</small></Rate>
        </Rates>
      </Meter>
    </Screen>
  );
}
